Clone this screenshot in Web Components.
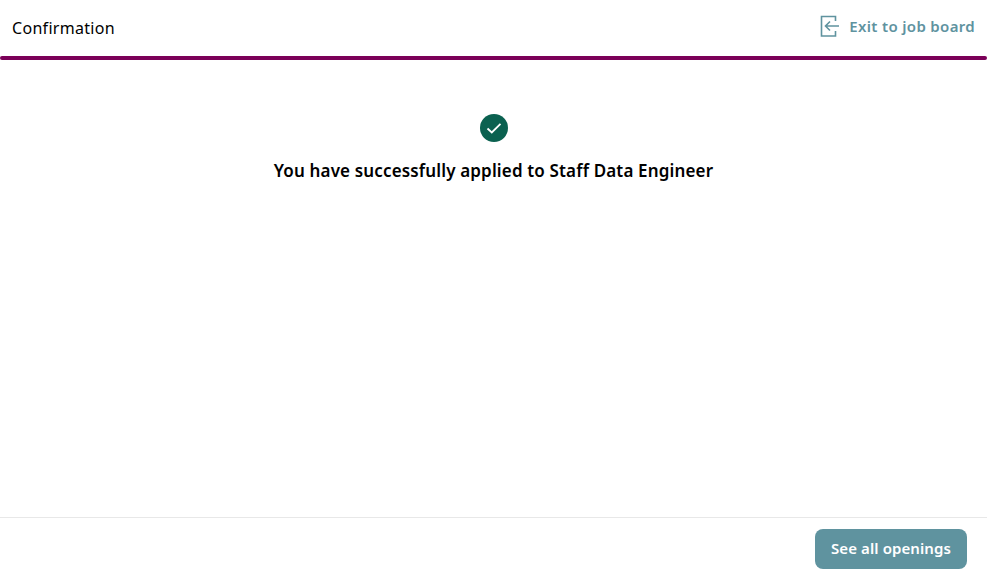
<!DOCTYPE html>
<html>
<head>
<meta charset="utf-8">
<title>Confirmation</title>
<style>
  html, body { height: 100%; margin: 0; }
  body { background: #fff; font-family: "Noto Sans", "Open Sans", sans-serif; }
</style>
</head>
<body>
<apply-page>
  <apply-header slot="header" heading="Confirmation" link="Exit to job board"></apply-header>
  <apply-message text="You have successfully applied to Staff Data Engineer"></apply-message>
  <apply-footer slot="footer" label="See all openings"></apply-footer>
</apply-page>
<script>
class ApplyPage extends HTMLElement {
  constructor() {
    super();
    this.attachShadow( {mode: 'open'} ).innerHTML = /* template */ `
      <style>
        :host {
          box-sizing: border-box;
          display: flex;
          flex-direction: column;
          height: 581px;
        }
        main {
          flex-basis: 0;
          flex-grow: 1;
        }
      </style>
      <slot name="header"></slot>
      <main><slot></slot></main>
      <slot name="footer"></slot>
    `;
  }
}

class ApplyHeader extends HTMLElement {
  constructor() {
    super();
    this.attachShadow( {mode: 'open'} ).innerHTML = /* template */ `
      <style>
        :host {
          box-sizing: border-box;
          display: block;
        }
        div[part=row] {
          align-items: center;
          display: flex;
          height: 56px;
          justify-content: space-between;
          padding: 0 12px;
        }
        div[part=bar] {
          background: #7b0058;
          border-radius: 2px;
          height: 4px;
        }
        p {
          color: #000;
          font-size: 16px;
          letter-spacing: 0.3px;
          margin: 0;
        }
        a {
          align-items: center;
          color: #5f939f;
          display: flex;
          font-size: 15px;
          font-weight: 600;
          gap: 9px;
          letter-spacing: 0.33px;
          margin-bottom: 4px;
        }
        svg { display: block; }
      </style>
      <div part="row">
        <p></p>
        <a>
          <svg width="20" height="22" viewBox="0 0 20 22" fill="none" stroke="#5f939f" stroke-width="1.6">
            <path d="M15.5 6V1.5H1.5V21H15.5V16" />
            <path d="M19 11H5.5M10 6.5L5.5 11L10 15.5" />
          </svg>
          <span></span>
        </a>
      </div>
      <div part="bar"></div>
    `;
    this.shadowRoot.querySelector( 'p' ).textContent = this.getAttribute( 'heading' );
    this.shadowRoot.querySelector( 'span' ).textContent = this.getAttribute( 'link' );
  }
}

class ApplyMessage extends HTMLElement {
  constructor() {
    super();
    this.attachShadow( {mode: 'open'} ).innerHTML = /* template */ `
      <style>
        :host {
          align-items: center;
          display: flex;
          flex-direction: column;
          gap: 17px;
          padding-top: 54px;
        }
        svg { display: block; }
        p {
          color: #000;
          font-size: 17px;
          font-weight: 600;
          letter-spacing: 0.15px;
          line-height: 24px;
          margin: 0;
        }
      </style>
      <svg width="28" height="28" viewBox="0 0 28 28">
        <circle cx="14" cy="14" r="14" fill="#0b6150" />
        <path d="M7.5 14.5L11.8 18.5L20.5 9.8" fill="none" stroke="#fff" stroke-width="1.8" />
      </svg>
      <p></p>
    `;
    this.shadowRoot.querySelector( 'p' ).textContent = this.getAttribute( 'text' );
  }
}

class ApplyFooter extends HTMLElement {
  constructor() {
    super();
    this.attachShadow( {mode: 'open'} ).innerHTML = /* template */ `
      <style>
        :host {
          border-top: 1px solid #e8e8e8;
          box-sizing: border-box;
          display: flex;
          justify-content: flex-end;
          height: 64px;
          padding: 11px 20px 0 0;
        }
        button {
          background: #5f939f;
          border: 0;
          border-radius: 8px;
          color: #fff;
          font-family: inherit;
          font-size: 15px;
          font-weight: 600;
          height: 40px;
          letter-spacing: 0.1px;
          padding: 0 0 2px;
          width: 152px;
        }
      </style>
      <button></button>
    `;
    this.shadowRoot.querySelector( 'button' ).textContent = this.getAttribute( 'label' );
  }
}

window.customElements.define( 'apply-page', ApplyPage );
window.customElements.define( 'apply-header', ApplyHeader );
window.customElements.define( 'apply-message', ApplyMessage );
window.customElements.define( 'apply-footer', ApplyFooter );
</script>
</body>
</html>
